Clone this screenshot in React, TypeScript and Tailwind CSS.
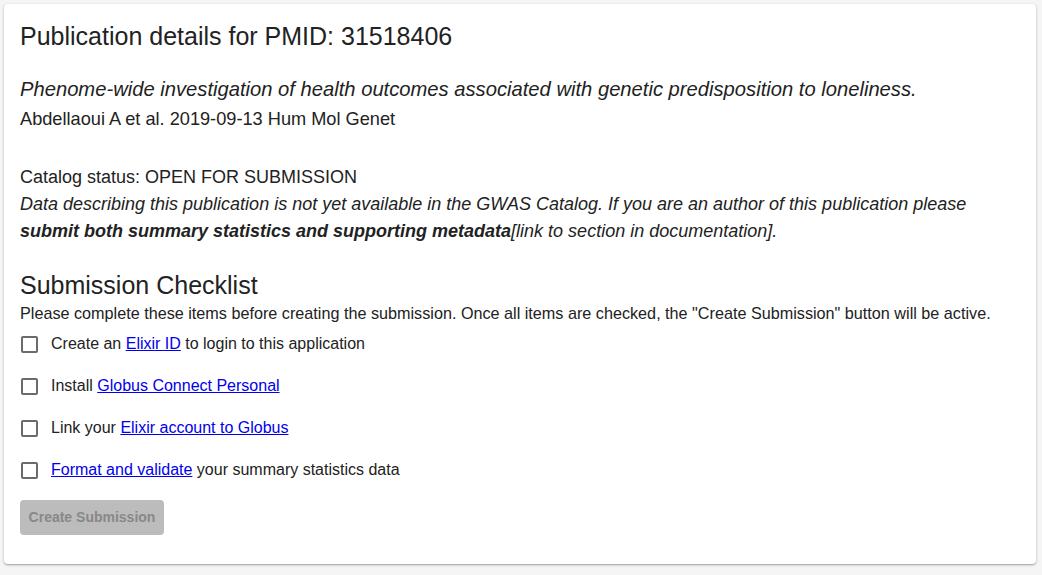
import React from "react";

const items: { pre: string; link: string; post: string }[] = [
  { pre: "Create an ", link: "Elixir ID", post: " to login to this application" },
  { pre: "Install ", link: "Globus Connect Personal", post: "" },
  { pre: "Link your ", link: "Elixir account to Globus", post: "" },
  { pre: "", link: "Format and validate", post: " your summary statistics data" },
];

export default function App() {
  return (
    <div
      className="min-h-[575px] w-full bg-[#f5f5f5] p-[4px] text-[#222]"
      style={{ fontFamily: '"Liberation Sans", Arial, sans-serif' }}
    >
      <div className="h-[560px] w-[1032px] rounded-[4px] bg-white px-[16px] pt-[20px] shadow-[0_1px_3px_rgba(0,0,0,0.25),0_1px_1px_rgba(0,0,0,0.14)]">
        <h1 className="text-[25px] leading-[24px] text-[#222]">Publication details for PMID: 31518406</h1>
        <p className="mt-[27px] text-[20.2px] italic leading-[28px]">
          Phenome-wide investigation of health outcomes associated with genetic predisposition to loneliness.
        </p>
        <p className="text-[18.2px] leading-[32px]">Abdellaoui A et al. 2019-09-13 Hum Mol Genet</p>

        <p className="mt-[28px] text-[18px] leading-[28px]">Catalog status: OPEN FOR SUBMISSION</p>
        <p className="text-[18px] italic leading-[27px]">
          Data describing this publication is not yet available in the GWAS Catalog. If you are an author of this publication please{" "}
          <b>submit both summary statistics and supporting metadata</b>[link to section in documentation].
        </p>

        <h2 className="mt-[25px] text-[25px] leading-[30px]">Submission Checklist</h2>
        <p className="text-[16.2px] leading-[26px]">
          Please complete these items before creating the submission. Once all items are checked, the "Create Submission" button will be active.
        </p>

        <div className="mt-[9px] flex flex-col gap-[24px]">
          {items.map((it, i) => (
            <div key={i} className="flex h-[18px] items-center">
              <span className="ml-[1px] h-[17px] w-[17px] rounded-[2px] border-2 border-[#6b6b6b]" />
              <span className="ml-[13px] text-[16px] leading-[18px]">
                {it.pre}
                <a href="#" className="text-[#0000ee] underline">
                  {it.link}
                </a>
                {it.post}
              </span>
            </div>
          ))}
        </div>

        <button
          disabled
          className="mt-[21px] h-[35px] w-[144px] rounded-[4px] bg-[#bcbcbc] text-[14px] font-bold text-[#888]"
        >
          Create Submission
        </button>
      </div>
    </div>
  );
}
